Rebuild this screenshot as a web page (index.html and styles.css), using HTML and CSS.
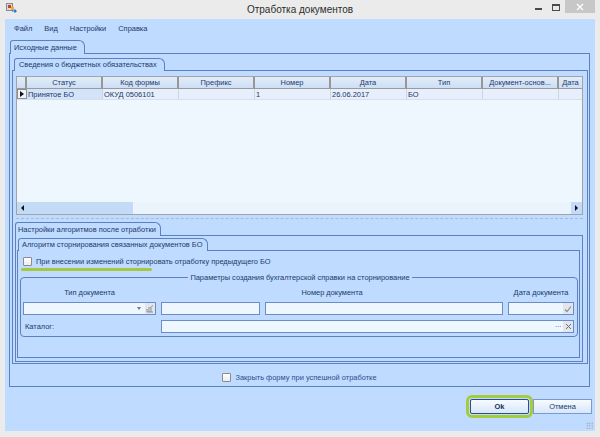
FILE: index.html
```html
<!DOCTYPE html>
<html lang="ru">
<head>
<meta charset="utf-8">
<title>Отработка документов</title>
<link rel="stylesheet" href="styles.css">
</head>
<body>
<div class="window">
  <div class="titlebar">
    <div class="tb-left">
      <svg class="app-icon" width="11" height="11" viewBox="0 0 11 11">
        <rect x="0.5" y="0.5" width="6" height="7" fill="#d8d8d8" stroke="#8a8a8a"/>
        <rect x="2" y="2" width="3" height="3" fill="#d23a2a"/>
        <rect x="5" y="4" width="3" height="3" fill="#e8b030"/>
        <path d="M6 8 L10 8 L8.5 6.5 M10 8 L8.5 9.5" fill="none" stroke="#2d6fd0" stroke-width="1.2"/>
      </svg>
    </div>
    <div class="title">Отработка документов</div>
    <div class="controls">
      <span class="ctl-min"></span>
      <span class="ctl-max"></span>
      <span class="ctl-close">
        <svg width="8" height="8" viewBox="0 0 8 8"><path d="M1 1 L7 7 M7 1 L1 7" stroke="#ffffff" stroke-width="1.3"/></svg>
      </span>
    </div>
  </div>

  <div class="client">
    <div class="menu">
      <span class="menu-item">Файл</span>
      <span class="menu-item">Вид</span>
      <span class="menu-item">Настройки</span>
      <span class="menu-item">Справка</span>
    </div>

    <div class="tab t-outer">Исходные данные</div>
    <div class="panel p-outer">
      <div class="tab t-sved">Сведения о бюджетных обязательствах</div>
      <div class="panel p-sved">
        <div class="grid">
          <div class="g-row g-head">
            <div class="g-ind"></div>
            <div class="g-cell">Статус</div>
            <div class="g-cell">Код формы</div>
            <div class="g-cell">Префикс</div>
            <div class="g-cell">Номер</div>
            <div class="g-cell">Дата</div>
            <div class="g-cell">Тип</div>
            <div class="g-cell">Документ-основ...</div>
            <div class="g-cell g-last">Дата</div>
          </div>
          <div class="g-row g-data">
            <div class="g-ind"><span class="tri-right"></span></div>
            <div class="g-cell sel">Принятое БО</div>
            <div class="g-cell">ОКУД 0506101</div>
            <div class="g-cell"></div>
            <div class="g-cell">1</div>
            <div class="g-cell">26.06.2017</div>
            <div class="g-cell">БО</div>
            <div class="g-cell"></div>
            <div class="g-cell g-last"></div>
          </div>
          <div class="g-body"></div>
          <div class="g-scroll">
            <div class="sb-btn"><span class="tri-left"></span></div>
            <div class="sb-thumb"></div>
            <div class="sb-track"></div>
            <div class="sb-btn"><span class="tri-right small"></span></div>
          </div>
        </div>
        <div class="splitter"></div>

        <div class="tab t-set">Настройки алгоритмов после отработки</div>
        <div class="panel p-set">
          <div class="tab t-alg">Алгоритм сторнирования связанных документов БО</div>
          <div class="panel p-alg">
            <label class="check c-storno"><span class="box"></span><span>При внесении изменений сторнировать отработку предыдущего БО</span></label>
            <div class="hl-line"></div>
            <fieldset class="params">
              <legend>Параметры создания бухгалтерской справки на сторнирование</legend>
              <div class="pgrid">
                <div class="plabel l-type">Тип документа</div>
                <div class="plabel l-num">Номер документа</div>
                <div class="plabel l-date">Дата документа</div>

                <div class="inp">
                  <span class="dd-arrow"></span>
                  <span class="inp-btn">
                    <svg width="8" height="8" viewBox="0 0 8 8"><path d="M1 7 L1 4 M3 7 L3 2 M5 7 L5 3 M1 7 L7 7 M4 3 L7 0.5" fill="none" stroke="#8a8f98" stroke-width="1"/></svg>
                  </span>
                </div>
                <div class="inp"></div>
                <div class="inp"></div>
                <div class="inp">
                  <span class="inp-btn">
                    <svg width="8" height="8" viewBox="0 0 8 8"><path d="M1 4.5 L3 6.5 L7 1.5" fill="none" stroke="#8a8f98" stroke-width="1.2"/></svg>
                  </span>
                </div>

                <div class="plabel l-cat">Каталог:</div>
                <div class="inp i-cat">
                  <span class="dots">···</span>
                  <span class="inp-btn">
                    <svg width="7" height="7" viewBox="0 0 7 7"><path d="M1 1 L6 6 M6 1 L1 6" stroke="#6b7078" stroke-width="1"/></svg>
                  </span>
                </div>
              </div>
            </fieldset>
          </div>
        </div>
      </div>
      <div class="close-row">
        <label class="check"><span class="box"></span><span>Закрыть форму при успешной отработке</span></label>
      </div>
    </div>

    <div class="buttons">
      <button class="btn btn-ok">Ok</button>
      <button class="btn">Отмена</button>
    </div>
    <div class="grip"></div>
  </div>
</div>
</body>
</html>
```

FILE: styles.css
```css
* { box-sizing: border-box; }
html, body { margin: 0; padding: 0; }
body {
  width: 600px;
  height: 437px;
  overflow: hidden;
  background: #ebebeb;
  font-family: "Liberation Sans", Arial, sans-serif;
  font-size: 7.45px;
  line-height: 9px;
  color: #1c3a6a;
}
.window { width: 600px; height: 437px; display: flex; flex-direction: column; }

/* title bar */
.titlebar {
  flex: none;
  height: 19px;
  display: grid;
  grid-template-columns: 1fr auto 1fr;
  align-items: start;
}
.tb-left { display: flex; }
.app-icon { margin: 3px 0 0 6px; }
.title { font-size: 10px; line-height: 20px; color: #2b2b2b; }
.controls { justify-self: end; display: flex; align-items: flex-start; }
.ctl-min { width: 7px; height: 2px; background: #4a4a4a; margin-top: 8px; }
.ctl-max { width: 8px; height: 7px; border: 1px solid #4a4a4a; border-top-width: 2px; margin: 4px 0 0 10px; }
.ctl-close {
  width: 30px; height: 13px; margin: 0 5px 0 5px;
  background: #c7c7c7;
  display: flex; align-items: center; justify-content: center;
}

/* client */
.client {
  position: relative;
  flex: none;
  height: 412px;
  margin: 0 5px;
  background: #bfdbff;
}
.menu { height: 19px; display: flex; align-items: center; padding-left: 3px; }
.menu-item { padding: 0 6px; }

/* tabs and panels */
.tab {
  position: relative;
  z-index: 1;
  width: max-content;
  white-space: nowrap;
  border: 1px solid #5d80c0;
  border-bottom: none;
  border-radius: 3px 6px 0 0;
  background: #bfdbff;
  margin-bottom: -1px;
}
.panel { border: 1px solid #5d80c0; background: #bfdbff; }

.t-outer { height: 14px; line-height: 13px; margin: 2px 0 -1px 5px; padding: 0 7px 0 3px; }
.p-outer { width: 581px; height: 334px; margin-left: 4px; }

.t-sved { height: 13px; line-height: 12px; margin: 4px 0 -1px 4px; padding: 0 7px 0 4px; }
.p-sved { width: 576px; height: 294px; margin-left: 2px; }

.t-set { height: 14px; line-height: 13px; margin: 0 0 -1px 2px; padding: 0 4px 0 2px; }
.p-set { width: 568px; height: 127px; margin-left: 2px; }

.t-alg { height: 13px; line-height: 12px; margin: 2px 0 -1px 2px; padding: 0 5px 0 3px; }
.p-alg { width: 563px; height: 108px; margin-left: 1px; }

/* grid */
.grid {
  width: 567px;
  height: 139px;
  margin: 5px 0 0 3px;
  border: 1px solid #a3a3a3;
  background: #eff7fe;
  display: flex;
  flex-direction: column;
  overflow: hidden;
}
.g-row { display: flex; flex: none; }
.g-head {
  height: 12px;
  background: linear-gradient(#e2ecf9, #cddff5);
  border-bottom: 1px solid #9a9a9a;
}
.g-head .g-cell { text-align: center; border-right: 2px solid #979797; line-height: 11px; }
.g-ind { width: 10px; flex: none; border-right: 1px solid #979797; display: flex; align-items: center; justify-content: center; }
.g-head .g-ind { border-right: 2px solid #979797; }
.g-cell {
  width: 76px;
  flex: none;
  overflow: hidden;
  white-space: nowrap;
  padding: 0 1px;
}
.g-last { flex: 1; width: auto; border-right: none !important; }
.g-data { height: 11px; background: #e6effb; border-bottom: 1px solid #d6dfeb; }
.g-data .g-cell { border-right: 1px solid #cbd5e2; line-height: 11px; color: #1a3768; }
.g-data .g-ind { background: #edf3fb; border: 1px solid #8f8f8f; }
.g-data .sel { background: #d3e4fa; }
.g-body { flex: 1; }
.g-scroll { height: 12px; flex: none; display: flex; background: #ebf3fc; }
.sb-btn { width: 11px; flex: none; background: #c4dbf7; display: flex; align-items: center; justify-content: center; }
.sb-thumb { width: 105px; flex: none; background: #c4dbf7; }
.sb-track { flex: 1; }

.tri-right { width: 0; height: 0; border-left: 4px solid #111; border-top: 3.5px solid transparent; border-bottom: 3.5px solid transparent; }
.tri-right.small { border-left-width: 3px; border-top-width: 3px; border-bottom-width: 3px; }
.tri-left { width: 0; height: 0; border-right: 3px solid #111; border-top: 3px solid transparent; border-bottom: 3px solid transparent; }

.splitter { height: 4px; margin: 0 4px 3px 3px; border-bottom: 1px dashed #a7bad6; }

/* checkbox */
.check { display: flex; align-items: center; gap: 4px; white-space: nowrap; }
.box {
  width: 9px; height: 9px; flex: none;
  border: 1px solid #8c8c8c;
  border-radius: 1px;
  background: linear-gradient(#ffffff, #ececec);
}
.c-storno { margin: 6px 0 0 5px; height: 9px; }
.hl-line { width: 131px; height: 3px; margin: 2px 0 0 3px; background: #a4c93c; border-radius: 2px; }

/* fieldset */
.params {
  width: 558px;
  margin: 2px 0 0 2px;
  padding: 0 0 3px 2px;
  border: 1px solid #5d80c0;
  border-radius: 4px;
  min-width: 0;
}
.params legend {
  margin: 0 auto;
  padding: 0 2px;
  line-height: 9px;
}
.pgrid {
  display: grid;
  grid-template-columns: 133px 99px 238px 66px;
  grid-template-rows: 9px 13px 13px;
  column-gap: 5px;
  row-gap: 5px;
  margin-top: 6px;
}
.plabel { white-space: nowrap; text-align: center; line-height: 9px; }
.l-num { grid-column: 2 / 4; }
.l-cat { text-align: left; padding-left: 2px; line-height: 13px; }
.i-cat { grid-column: 2 / 5; }
.inp {
  border: 1px solid #6b8cc6;
  background: #eef7ff;
  display: flex;
  justify-content: flex-end;
  align-items: center;
}
.inp-btn {
  width: 10px; height: 11px;
  background: #e2e6ec;
  display: flex; align-items: center; justify-content: center;
}
.dd-arrow {
  width: 0; height: 0;
  border-top: 3px solid #777;
  border-left: 2.5px solid transparent;
  border-right: 2.5px solid transparent;
  margin-right: 4px;
}
.dots { color: #555; margin-right: 2px; letter-spacing: -0.5px; }

/* bottom */
.close-row { display: flex; justify-content: center; padding-top: 9px; }
.close-row .check { color: #2a4d8a; }

.buttons { display: flex; justify-content: flex-end; gap: 4px; margin-top: 12px; padding-right: 3px; }
.btn {
  width: 59px;
  height: 15px;
  padding: 0;
  border: 1px solid #7a9ad0;
  background: linear-gradient(#f7fbff, #d6e6fa);
  font-family: "Liberation Sans", Arial, sans-serif;
  font-size: 7.45px;
  color: #1c3a6a;
}
.btn-ok {
  border-color: #2f4f82;
  font-weight: bold;
  color: #1a2f55;
  outline: 3px solid #a6cb3b;
  outline-offset: 1px;
  border-radius: 2px;
}

.grip {
  position: absolute;
  right: 2px;
  bottom: 2px;
  width: 7px;
  height: 7px;
  background-image: radial-gradient(circle, #9aa3ad 0.7px, transparent 0.9px);
  background-size: 2.5px 2.5px;
}
```
